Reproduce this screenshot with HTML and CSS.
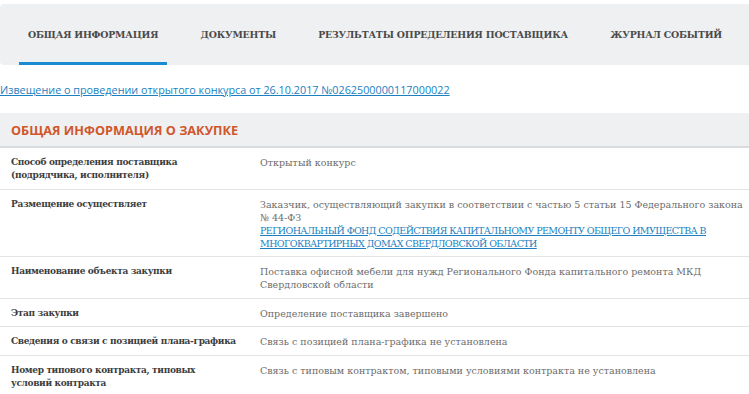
FILE: index.html
```html
<!DOCTYPE html>
<html lang="ru">
<head>
  <meta charset="UTF-8">
  <title>Общая информация</title>
  <link rel="stylesheet" href="styles.css">
</head>
<body>
  <nav class="tabs">
    <a class="tab active" href="#">Общая информация</a>
    <a class="tab" href="#">Документы</a>
    <a class="tab" href="#">Результаты определения поставщика</a>
    <a class="tab" href="#">Журнал событий</a>
  </nav>

  <div class="notice">
    <a href="#">Извещение о проведении открытого конкурса от 26.10.2017 №0262500000117000022</a>
  </div>

  <section class="block">
    <h2 class="block-title">Общая информация о закупке</h2>
    <div class="rows">
      <div class="row">
        <div class="label">Способ определения поставщика<br>(подрядчика, исполнителя)</div>
        <div class="value">Открытый конкурс</div>
      </div>
      <div class="row">
        <div class="label">Размещение осуществляет</div>
        <div class="value">
          Заказчик, осуществляющий закупки в соответствии с частью 5 статьи 15 Федерального закона № 44-ФЗ<br>
          <a href="#" class="upper">Региональный фонд содействия капитальному ремонту общего имущества в многоквартирных домах Свердловской области</a>
        </div>
      </div>
      <div class="row">
        <div class="label">Наименование объекта закупки</div>
        <div class="value">Поставка офисной мебели для нужд Регионального Фонда капитального ремонта МКД Свердловской области</div>
      </div>
      <div class="row">
        <div class="label">Этап закупки</div>
        <div class="value">Определение поставщика завершено</div>
      </div>
      <div class="row">
        <div class="label">Сведения о связи с позицией плана-графика</div>
        <div class="value">Связь с позицией плана-графика не установлена</div>
      </div>
      <div class="row">
        <div class="label">Номер типового контракта, типовых<br>условий контракта</div>
        <div class="value">Связь с типовым контрактом, типовыми условиями контракта не установлена</div>
      </div>
    </div>
  </section>
</body>
</html>
```

FILE: styles.css
```css
body {
  margin: 0;
  padding-top: 4px;
  font-family: "DejaVu Serif", serif;
  background: #fff;
  color: #444;
}
a {
  color: #1b7fc0;
}

/* Вкладки */
.tabs {
  display: flex;
  justify-content: space-between;
  height: 61px;
  padding: 0 18px 0 19px;
  background-color: #eef0f2;
  border-radius: 4px 0 0 4px;
}
.tab {
  display: flex;
  align-items: center;
  padding: 0 9px;
  margin-top: 3px;
  border-bottom: 3px solid transparent;
  font-size: 9.4px;
  font-weight: bold;
  letter-spacing: -0.2px;
  white-space: nowrap;
  text-transform: uppercase;
  text-decoration: none;
  color: #4a4a4a;
}
.tab.active {
  border-bottom-color: #1a8bd0;
}

.notice {
  height: 48px;
  display: flex;
  align-items: center;
  font-family: "Open Sans", sans-serif;
  font-size: 10.8px;
}

/* Блок информации */
.block-title {
  margin: 0;
  height: 33px;
  display: flex;
  align-items: center;
  padding-left: 11px;
  background-color: #eef0f2;
  border-bottom: 2px solid #d9dbdd;
  font-family: "Open Sans", sans-serif;
  font-size: 12.7px;
  font-weight: bold;
  text-transform: uppercase;
  color: #d0572b;
}
.row {
  display: grid;
  grid-template-columns: 249px 1fr;
  padding: 8px 0 6.5px 11px;
  border-bottom: 1px solid #e1e3e5;
  font-size: 9.5px;
  line-height: 13px;
}
.label {
  font-size: 9px;
  font-weight: bold;
  letter-spacing: -0.35px;
  color: #3d3d3d;
}
.value {
  color: #6c6c6c;
}
.upper {
  text-transform: uppercase;
  letter-spacing: -0.6px;
}
```
